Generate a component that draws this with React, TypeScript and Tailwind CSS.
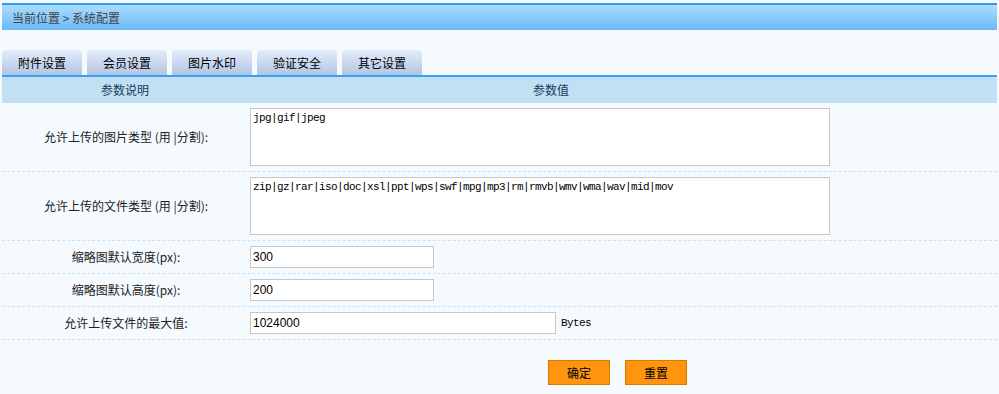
import { useState } from 'react'

const TABS = ['附件设置', '会员设置', '图片水印', '验证安全', '其它设置']

const CJK = "font-['Noto_Sans_CJK_SC','Noto_Sans',sans-serif]"
const MONO = "font-['Liberation_Mono','Noto_Sans_CJK_SC',monospace]"

interface FieldRow {
  label: string
  value: string
  kind: 'area' | 'short' | 'long'
  suffix?: string
}

const ROWS: FieldRow[] = [
  { label: '允许上传的图片类型 (用 |分割):', value: 'jpg|gif|jpeg', kind: 'area' },
  {
    label: '允许上传的文件类型 (用 |分割):',
    value: 'zip|gz|rar|iso|doc|xsl|ppt|wps|swf|mpg|mp3|rm|rmvb|wmv|wma|wav|mid|mov',
    kind: 'area',
  },
  { label: '缩略图默认宽度(px):', value: '300', kind: 'short' },
  { label: '缩略图默认高度(px):', value: '200', kind: 'short' },
  { label: '允许上传文件的最大值:', value: '1024000', kind: 'long', suffix: 'Bytes' },
]

function Field({ row }: { row: FieldRow }) {
  if (row.kind === 'area') {
    return (
      <textarea
        defaultValue={row.value}
        className={`h-[58px] w-[580px] resize-none border border-[#c8c8c8] bg-white px-[2px] py-[2px] text-[11px] leading-[14px] tracking-[-0.6px] text-black outline-none ${MONO}`}
      />
    )
  }
  return (
    <div className="flex items-center gap-[5px]">
      <input
        defaultValue={row.value}
        className={`h-[22px] border border-[#c8c8c8] bg-white px-[2px] text-[12px] text-black outline-none font-['Liberation_Sans',sans-serif] ${row.kind === 'short' ? 'w-[184px]' : 'w-[306px]'}`}
      />
      {row.suffix && <span className={`text-[11px] tracking-[-0.6px] text-black ${MONO}`}>{row.suffix}</span>}
    </div>
  )
}

export default function App() {
  const [active, setActive] = useState(0)

  return (
    <div className={`h-[394px] w-[999px] overflow-hidden bg-[#f5faff] px-[2px] pt-[3px] text-[12px] ${CJK}`}>
      {/* location bar */}
      <div className="flex h-[27px] items-center border-t-2 border-[#3399ee] bg-gradient-to-b from-[#aadcff] to-[#6cb9f6] pl-[10px] text-[#444]">
        当前位置 &gt; 系统配置
      </div>

      {/* tabs */}
      <div className="mt-[20px] flex h-[25px] gap-[5px]">
        {TABS.map((tab, index) => (
          <button
            key={tab}
            type="button"
            onClick={() => setActive(index)}
            className={`h-[25px] w-[80px] rounded-t-[4px] bg-gradient-to-b text-[12px] text-black ${active === index ? 'from-[#e2ecfb] to-[#b3c5e4]' : 'from-[#e2ecfb] to-[#b3c5e4]'}`}
          >
            {tab}
          </button>
        ))}
      </div>

      {/* table */}
      <div className="border-t-2 border-[#3aa2f2]">
        <div className="flex h-[26px] items-center bg-[#c2e0f4] text-[#163a5e]">
          <div className="w-[246px] text-center">参数说明</div>
          <div className="w-[606px] text-center">参数值</div>
        </div>

        {ROWS.map((row) => (
          <div key={row.label} className="flex items-center border-b border-dashed border-[#c6e3f6] py-[5px]">
            <div className="w-[248px] text-center text-[#222]">{row.label}</div>
            <Field row={row} />
          </div>
        ))}

        <div className="mt-[20px] flex justify-center gap-[15px] pl-[236px]">
          <button
            type="button"
            className="h-[25px] w-[62px] border border-[#d97800] bg-[#ff940f] text-[12px] text-black"
          >
            确定
          </button>
          <button
            type="button"
            className="h-[25px] w-[62px] border border-[#d97800] bg-[#ff940f] text-[12px] text-black"
          >
            重置
          </button>
        </div>
      </div>
    </div>
  )
}
